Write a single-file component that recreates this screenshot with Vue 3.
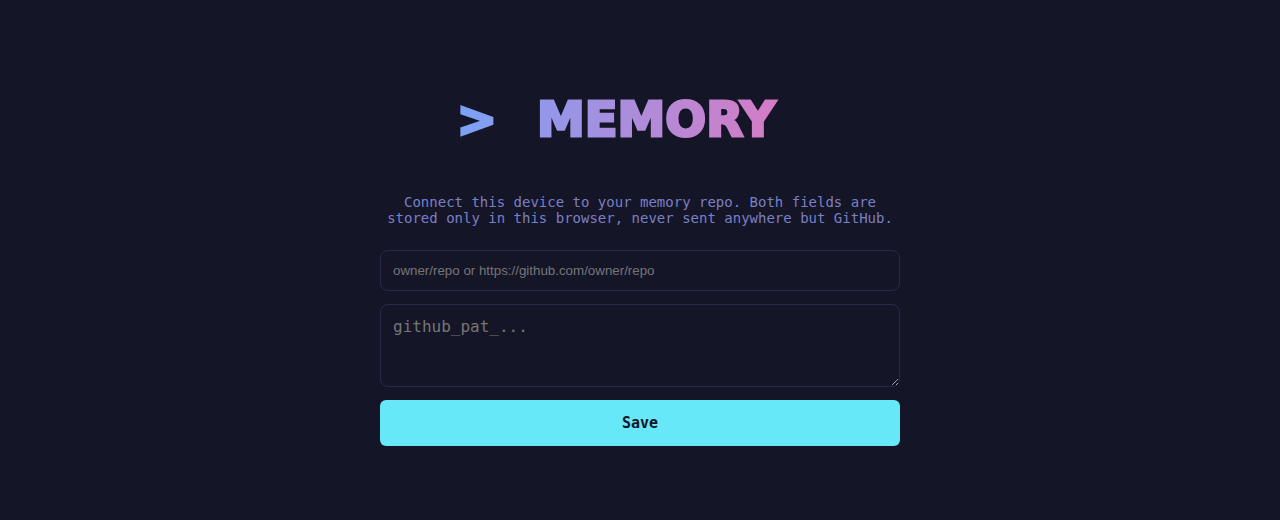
<template>
  <main class="setup">
    <h1 class="title">
      <span class="title-text"><span class="prompt">&gt;</span> <span>MEMORY</span></span>
      <span class="cursor" aria-hidden="true"></span>
    </h1>
    <form class="setup-form" @submit.prevent="save">
      <p class="hint">
        Connect this device to your memory repo. Both fields are stored only in this browser, never sent anywhere but GitHub.
      </p>
      <input v-model="repo" class="field" type="text" aria-label="Repository" placeholder="owner/repo or https://github.com/owner/repo" />
      <textarea v-model="token" class="field token" rows="3" aria-label="GitHub token" placeholder="github_pat_..." spellcheck="false"></textarea>
      <button class="save" type="submit">Save</button>
    </form>
  </main>
</template>

<script setup>
import { ref } from 'vue'

const repo = ref('')
const token = ref('')

function save() {
  if (!repo.value.trim() || !token.value.trim()) return
  localStorage.setItem('memory.repo', repo.value.trim())
  localStorage.setItem('memory.token', token.value.trim())
}
</script>

<style>
body { margin: 0; background: #151528; }
</style>

<style scoped>
.setup { min-height: 100vh; box-sizing: border-box; padding: 74px 16px; font-family: "DejaVu Sans Mono", monospace; }
.title { display: flex; justify-content: center; margin: 0 0 30px; font-family: "DejaVu Sans", sans-serif; font-size: 48px; font-weight: 700; line-height: 90px; }
.title-text { display: flex; gap: 40px; padding: 0 4px; background: linear-gradient(90deg, #7aa2f7, #d67bc4); -webkit-background-clip: text; background-clip: text; color: transparent; -webkit-text-stroke: 3px transparent; }
.cursor { width: 48px; }
.setup-form { display: flex; flex-direction: column; gap: 13px; max-width: 520px; margin: 0 auto; }
.hint { margin: 0 0 11px; color: #7b7fc4; font-size: 14px; line-height: 16px; text-align: center; }
.field { box-sizing: border-box; width: 100%; padding: 12px; border: 1px solid #29294f; border-radius: 8px; background: #151528; color: #e0e0ff; font-family: "Liberation Sans", sans-serif; }
.field::placeholder { color: #757575; }
.token { display: block; font-family: "DejaVu Sans Mono", monospace; font-size: 16px; line-height: 19px; resize: vertical; }
.save { padding: 14px; border: 0; border-radius: 6px; background: #67e8f9; color: #151528; font-family: "DejaVu Sans Mono", monospace; font-size: 15px; font-weight: 700; line-height: 18px; cursor: pointer; }
</style>
